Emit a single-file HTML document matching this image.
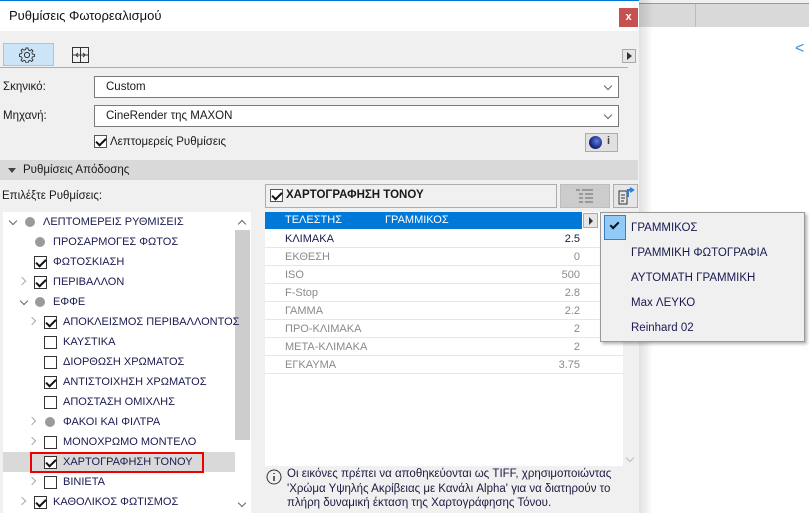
<!DOCTYPE html>
<html><head><meta charset="utf-8"><style>
*{margin:0;padding:0;box-sizing:border-box}
body{width:809px;height:513px;overflow:hidden;background:#fff;font-family:"Liberation Sans","DejaVu Sans",sans-serif;font-size:11px;color:#1a1a1a;position:relative}
.a{position:absolute}
.cb{position:absolute;width:13px;height:13px;border:1px solid #333;background:#fff}
.cb.c::after{content:"";position:absolute;left:3px;top:0px;width:4px;height:8px;border:solid #111;border-width:0 2px 2px 0;transform:rotate(45deg)}
.dot{position:absolute;width:10px;height:10px;border-radius:50%;background:#9a9a9a}
.chev{position:absolute;width:6px;height:6px;border:solid #555;border-width:0 1.5px 1.5px 0}
.r{position:absolute;height:20px;line-height:21px;white-space:nowrap}
.tr{position:absolute;left:265px;width:358px;height:18px;border-bottom:1px solid #e6e6e6;line-height:18px;color:#8a8a8a}
.tr span{position:absolute;right:43px}
.tr b{font-weight:normal;position:absolute;left:20px}
.mi{position:absolute;left:631px;font-size:11.5px;line-height:14px}
</style></head><body>
<div class="a" style="left:638px;top:0;width:171px;height:27px;background:#d9d9d9"></div>
<div class="a" style="left:638px;top:0;width:171px;height:4px;background:#f0f0f0;border-bottom:1px solid #999"></div>
<div class="a" style="left:695px;top:4px;width:1px;height:23px;background:#bbb"></div>
<div class="a" style="left:795px;top:40px;color:#3a8ee6;font-size:16px">&lt;</div>
<div class="a" style="left:639px;top:0;width:14px;height:513px;background:linear-gradient(to right,rgba(0,0,0,.12),rgba(0,0,0,0))"></div>
<div class="a" style="left:0;top:0;width:639px;height:513px;background:#f0f0f0"></div>
<div class="a" style="left:0;top:0;width:639px;height:31px;background:#fff;border-top:1px solid #0078d7"></div>
<div class="a" style="left:9px;top:8px;font-size:13px;color:#111">Ρυθμίσεις Φωτορεαλισμού</div>
<div class="a" style="left:619px;top:8px;width:19px;height:19px;background:#c75050;color:#fff;text-align:center;line-height:18px;font-weight:bold;font-size:11px">x</div>
<div class="a" style="left:3px;top:43px;width:51px;height:23px;background:#cce4f7;border:1px solid #99c9ef"></div>
<svg class="a" style="left:19px;top:47px" width="16" height="16" viewBox="0 0 16 16"><circle cx="8" cy="8" r="2.6" fill="none" stroke="#333"/><path d="M7 1h2l.4 2 1.5.7 1.7-1.2 1.4 1.4-1.2 1.7.7 1.5 2 .4v2l-2 .4-.7 1.5 1.2 1.7-1.4 1.4-1.7-1.2-1.5.7-.4 2H7l-.4-2-1.5-.7-1.7 1.2-1.4-1.4 1.2-1.7-.7-1.5-2-.4V7l2-.4.7-1.5-1.2-1.7 1.4-1.4 1.7 1.2 1.5-.7z" fill="none" stroke="#333" stroke-width=".9"/></svg>
<svg class="a" style="left:72px;top:47px" width="17" height="16" viewBox="0 0 17 16"><rect x=".5" y=".5" width="16" height="15" fill="none" stroke="#333"/><path d="M8.5 1v14M1 8h15M6 6l-2 2 2 2M11 6l2 2-2 2" fill="none" stroke="#333"/></svg>
<div class="a" style="left:622px;top:49px;width:14px;height:14px;border:1px solid #aaa;background:#e6e6e6"></div>
<div class="a" style="left:627px;top:52px;border-left:5px solid #333;border-top:4px solid transparent;border-bottom:4px solid transparent"></div>
<div class="a" style="left:0;top:67px;width:628px;height:1px;background:#adadad"></div>
<div class="a" style="left:3px;top:81px;font-size:11.5px">Σκηνικό:</div>
<div class="a" style="left:94px;top:76px;width:525px;height:22px;border:1px solid #7a7a7a;background:#fff;padding-left:11px;line-height:21px;font-size:11.5px">Custom</div>
<div class="chev" style="left:605px;top:83px;transform:rotate(45deg);border-color:#666;border-width:0 1px 1px 0"></div>
<div class="a" style="left:3px;top:110px;font-size:11.5px">Μηχανή:</div>
<div class="a" style="left:94px;top:105px;width:525px;height:22px;border:1px solid #7a7a7a;background:#fff;padding-left:11px;line-height:21px;font-size:11.5px">CineRender της MAXON</div>
<div class="chev" style="left:605px;top:112px;transform:rotate(45deg);border-color:#666;border-width:0 1px 1px 0"></div>
<div class="cb c" style="left:94px;top:135px;border-color:#555"></div>
<div class="a" style="left:110px;top:136px;font-size:11.5px">Λεπτομερείς Ρυθμίσεις</div>
<div class="a" style="left:585px;top:133px;width:33px;height:19px;border:1px solid #adadad;background:#e1e1e1"></div>
<div class="a" style="left:589px;top:136px;width:13px;height:13px;border-radius:50%;background:radial-gradient(circle at 60% 40%,#5a7fe0,#1a2a80 60%,#000)"></div>
<div class="a" style="left:607px;top:135px;font-weight:bold;color:#444">i</div>
<div class="a" style="left:0;top:160px;width:638px;height:20px;background:#d9d9d9"></div>
<div class="a" style="left:8px;top:168px;border-top:5px solid #444;border-left:4px solid transparent;border-right:4px solid transparent"></div>
<div class="a" style="left:23px;top:164px;font-size:11.5px">Ρυθμίσεις Απόδοσης</div>
<div class="a" style="left:2px;top:190px;font-size:11.5px">Επιλέξτε Ρυθμίσεις:</div>
<div class="a" style="left:3px;top:212px;width:248px;height:301px;background:#fff"></div>
<div class="a" style="left:235px;top:230px;width:15px;height:210px;background:#cdcdcd"></div>
<div class="chev" style="left:239px;top:221px;transform:rotate(-135deg);border-color:#666"></div>
<div class="chev" style="left:239px;top:500px;transform:rotate(45deg);border-color:#666"></div>
<div class="a" style="left:3px;top:452px;width:232px;height:20px;background:#d9d9d9"></div>
<div class="a" style="left:30px;top:452px;width:174px;height:21px;border:2px solid #e00"></div>
<div style="font-size:11px;color:#1a1a50">
<div class="chev" style="left:10px;top:218px;transform:rotate(45deg);border-color:#666"></div><div class="dot" style="left:25px;top:217px"></div><div class="r" style="left:43px;top:212px">ΛΕΠΤΟΜΕΡΕΙΣ ΡΥΘΜΙΣΕΙΣ</div>
<div class="dot" style="left:35px;top:237px"></div><div class="r" style="left:53px;top:232px">ΠΡΟΣΑΡΜΟΓΕΣ ΦΩΤΟΣ</div>
<div class="cb c" style="left:34px;top:256px"></div><div class="r" style="left:53px;top:252px">ΦΩΤΟΣΚΙΑΣΗ</div>
<div class="chev" style="left:19px;top:278px;transform:rotate(-45deg);border-color:#aaa"></div><div class="cb c" style="left:34px;top:276px"></div><div class="r" style="left:53px;top:272px">ΠΕΡΙΒΑΛΛΟΝ</div>
<div class="chev" style="left:21px;top:298px;transform:rotate(45deg);border-color:#666"></div><div class="dot" style="left:35px;top:297px"></div><div class="r" style="left:53px;top:292px">ΕΦΦΕ</div>
<div class="chev" style="left:29px;top:318px;transform:rotate(-45deg);border-color:#aaa"></div><div class="cb c" style="left:44px;top:316px"></div><div class="r" style="left:63px;top:312px">ΑΠΟΚΛΕΙΣΜΟΣ ΠΕΡΙΒΑΛΛΟΝΤΟΣ</div>
<div class="cb" style="left:44px;top:336px"></div><div class="r" style="left:63px;top:332px">ΚΑΥΣΤΙΚΑ</div>
<div class="cb" style="left:44px;top:356px"></div><div class="r" style="left:63px;top:352px">ΔΙΟΡΘΩΣΗ ΧΡΩΜΑΤΟΣ</div>
<div class="cb c" style="left:44px;top:376px"></div><div class="r" style="left:63px;top:372px">ΑΝΤΙΣΤΟΙΧΗΣΗ ΧΡΩΜΑΤΟΣ</div>
<div class="cb" style="left:44px;top:396px"></div><div class="r" style="left:63px;top:392px">ΑΠΟΣΤΑΣΗ ΟΜΙΧΛΗΣ</div>
<div class="chev" style="left:29px;top:418px;transform:rotate(-45deg);border-color:#aaa"></div><div class="dot" style="left:45px;top:417px"></div><div class="r" style="left:63px;top:412px">ΦΑΚΟΙ ΚΑΙ ΦΙΛΤΡΑ</div>
<div class="chev" style="left:29px;top:438px;transform:rotate(-45deg);border-color:#aaa"></div><div class="cb" style="left:44px;top:436px"></div><div class="r" style="left:63px;top:432px">ΜΟΝΟΧΡΩΜΟ ΜΟΝΤΕΛΟ</div>
<div class="cb c" style="left:44px;top:456px"></div><div class="r" style="left:63px;top:452px">ΧΑΡΤΟΓΡΑΦΗΣΗ ΤΟΝΟΥ</div>
<div class="chev" style="left:29px;top:478px;transform:rotate(-45deg);border-color:#aaa"></div><div class="cb" style="left:44px;top:476px"></div><div class="r" style="left:63px;top:472px">ΒΙΝΙΕΤΑ</div>
<div class="chev" style="left:19px;top:498px;transform:rotate(-45deg);border-color:#aaa"></div><div class="cb c" style="left:34px;top:496px"></div><div class="r" style="left:53px;top:492px">ΚΑΘΟΛΙΚΟΣ ΦΩΤΙΣΜΟΣ</div>
</div>
<div class="a" style="left:265px;top:184px;width:292px;height:24px;border:1px solid #adadad;background:#f0f0f0"></div>
<div class="cb c" style="left:270px;top:189px;border-color:#555"></div>
<div class="a" style="left:286px;top:189px;font-weight:bold;font-size:11.5px">ΧΑΡΤΟΓΡΑΦΗΣΗ ΤΟΝΟΥ</div>
<div class="a" style="left:560px;top:184px;width:50px;height:24px;background:#cccccc;border:1px solid #bdbdbd"></div>
<svg class="a" style="left:576px;top:189px" width="18" height="14"><path d="M0 1h4M6 1h11M3 5h4M9 5h8M3 9h4M9 9h8M3 13h4M9 13h8" stroke="#999" stroke-width="2"/></svg>
<div class="a" style="left:613px;top:184px;width:25px;height:24px;border:1px solid #adadad;background:#e6e6e6"></div>
<svg class="a" style="left:616px;top:186px" width="20" height="20"><path d="M3 5h8v13H3z" fill="none" stroke="#333"/><path d="M5 9h4M5 12h4M5 15h3" stroke="#333"/><path d="M12 11V4h4M14 2l3 2-3 2" fill="none" stroke="#2b7de0" stroke-width="2"/></svg>
<div class="a" style="left:265px;top:212px;width:358px;height:254px;background:#fff"></div>
<div class="a" style="left:265px;top:212px;width:317px;height:17px;background:#0078d7;color:#fff;line-height:17px"><span style="position:absolute;left:20px">ΤΕΛΕΣΤΗΣ</span><span style="position:absolute;left:120px">ΓΡΑΜΜΙΚΟΣ</span></div>
<div class="a" style="left:583px;top:213px;width:15px;height:15px;border:1px solid #aaa;background:#e6e6e6"></div>
<div class="a" style="left:589px;top:217px;border-left:4px solid #333;border-top:4px solid transparent;border-bottom:4px solid transparent"></div>
<div class="tr" style="top:230px;color:#1a1a50"><b>ΚΛΙΜΑΚΑ</b><span>2.5</span></div>
<div class="tr" style="top:248px"><b>ΕΚΘΕΣΗ</b><span>0</span></div>
<div class="tr" style="top:266px"><b>ISO</b><span>500</span></div>
<div class="tr" style="top:284px"><b>F-Stop</b><span>2.8</span></div>
<div class="tr" style="top:302px"><b>ΓΑΜΜΑ</b><span>2.2</span></div>
<div class="tr" style="top:320px"><b>ΠΡΟ-ΚΛΙΜΑΚΑ</b><span>2</span></div>
<div class="tr" style="top:338px"><b>ΜΕΤΑ-ΚΛΙΜΑΚΑ</b><span>2</span></div>
<div class="tr" style="top:356px"><b>ΕΓΚΑΥΜΑ</b><span>3.75</span></div>
<div class="chev" style="left:627px;top:455px;transform:rotate(45deg);border-color:#bbb;border-width:0 1px 1px 0"></div>
<svg class="a" style="left:266px;top:469px" width="16" height="16"><circle cx="8" cy="8" r="7" fill="none" stroke="#333"/><path d="M8 4v1M8 7v5" stroke="#333" stroke-width="1.5"/></svg>
<div class="a" style="left:287px;top:467px;font-size:11.5px;line-height:14.5px;color:#1a1a40;width:345px">Οι εικόνες πρέπει να αποθηκεύονται ως TIFF, χρησιμοποιώντας 'Χρώμα Υψηλής Ακρίβειας με Κανάλι Alpha' για να διατηρούν το πλήρη δυναμική έκταση της Χαρτογράφησης Τόνου.</div>
<div class="a" style="left:600px;top:212px;width:205px;height:130px;background:#f0f0f0;border:1px solid #999;box-shadow:2px 2px 3px rgba(0,0,0,.3)"></div>
<div class="a" style="left:604px;top:215px;width:22px;height:25px;background:#91c9f7;border:1px solid #3a7fc0"></div>
<div class="a" style="left:612px;top:220px;width:5px;height:9px;border:solid #111;border-width:0 2px 2px 0;transform:rotate(45deg)"></div>
<div style="color:#1a1a50">
<div class="mi" style="top:221px">ΓΡΑΜΜΙΚΟΣ</div>
<div class="mi" style="top:246px">ΓΡΑΜΜΙΚΗ ΦΩΤΟΓΡΑΦΙΑ</div>
<div class="mi" style="top:271px">ΑΥΤΟΜΑΤΗ ΓΡΑΜΜΙΚΗ</div>
<div class="mi" style="top:296px">Max ΛΕΥΚΟ</div>
<div class="mi" style="top:321px">Reinhard 02</div>
</div>
</body></html>
